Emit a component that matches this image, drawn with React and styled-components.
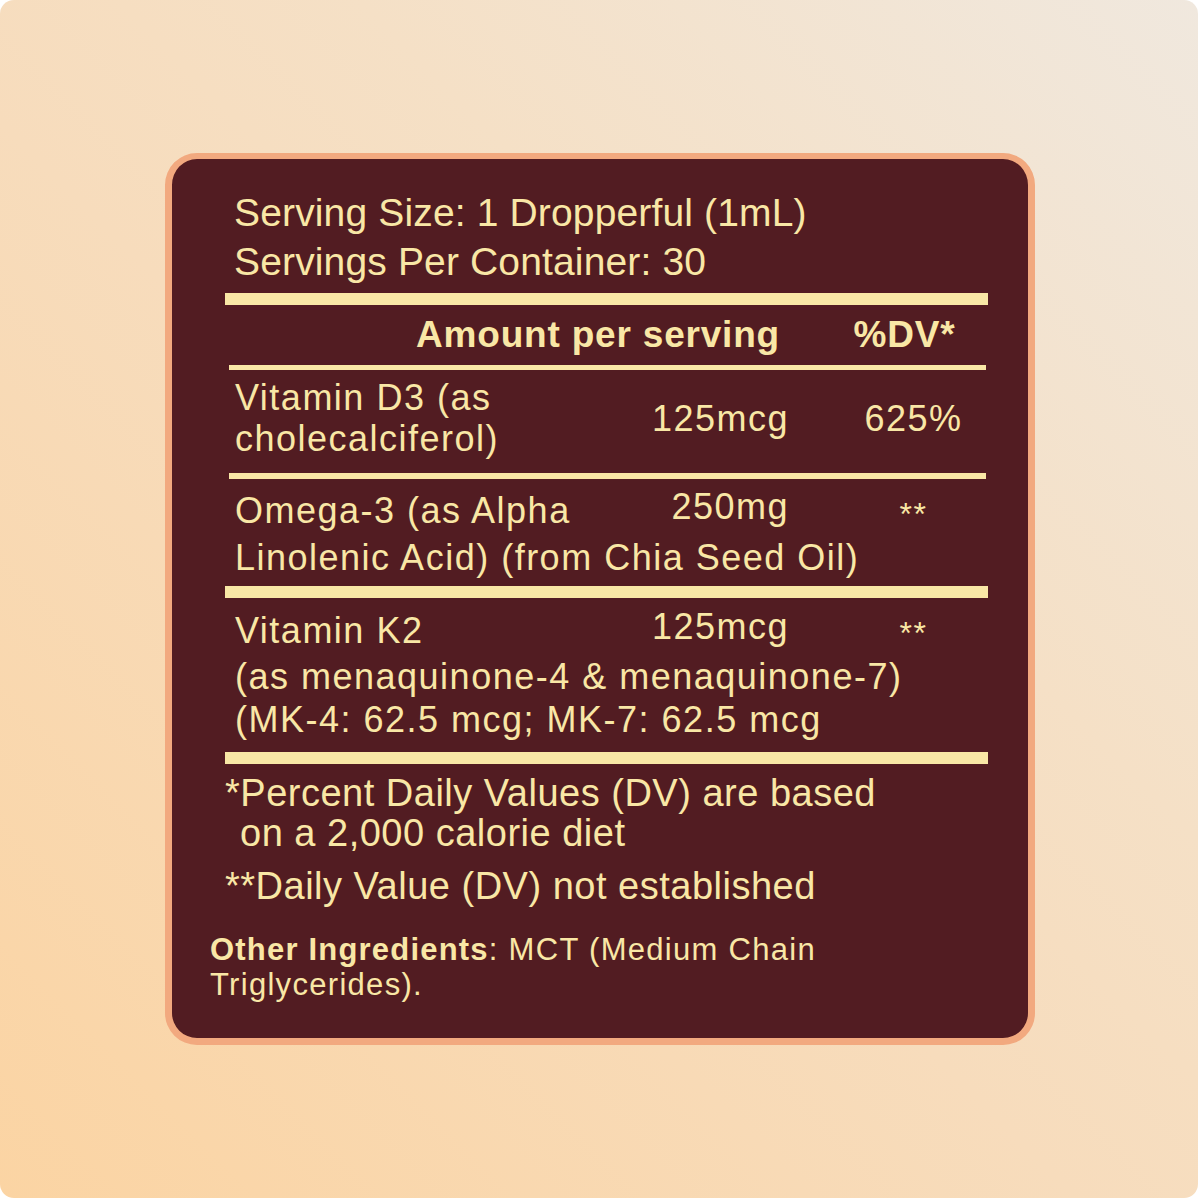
import React from "react";
import styled, { createGlobalStyle } from "styled-components";

const cream = "#f9e7a6";
const maroon = "#521c22";

const GlobalStyle = createGlobalStyle`
  html, body {
    margin: 0;
    padding: 0;
    background: #ffffff;
  }
  body {
    font-family: "Liberation Sans", Arial, Helvetica, sans-serif;
  }
`;

const nutrients = [
  {
    id: "d3",
    lines: ["Vitamin D3 (as", "cholecalciferol)"],
    amount: "125mcg",
    dv: "625%",
    stacked: true,
    lineHeight: 41,
    pad: [7, 14],
  },
  {
    id: "omega",
    lines: ["Omega-3 (as Alpha", "Linolenic Acid) (from Chia Seed Oil)"],
    amount: "250mg",
    dv: "**",
    lineHeight: 44,
    pad: [10, 6],
  },
  {
    id: "k2",
    lines: [
      "Vitamin K2",
      "(as menaquinone-4 & menaquinone-7)",
      "(MK-4: 62.5 mcg; MK-7: 62.5 mcg",
    ],
    amount: "125mcg",
    dv: "**",
    lineHeight: 43,
    pad: [11, 11],
  },
];

export default function App() {
  return (
    <>
      <GlobalStyle />
      <Frame>
        <Card>
          <Serving>
            <div>Serving Size: 1 Dropperful (1mL)</div>
            <div>Servings Per Container: 30</div>
          </Serving>

          <Facts>
            <Rule $h={12} />
            <HeadRow>
              <HeadAmount>Amount per serving</HeadAmount>
              <HeadDV>%DV*</HeadDV>
            </HeadRow>
            <Rule $h={5} $inset={4} />

            {nutrients.map((n, i) => (
              <React.Fragment key={n.id}>
                <NutrientRow $lh={n.lineHeight} $pt={n.pad[0]} $pb={n.pad[1]}>
                  {n.stacked ? (
                    <Name>
                      {n.lines.map(l => (
                        <div key={l}>{l}</div>
                      ))}
                    </Name>
                  ) : (
                    <Name>{n.lines[0]}</Name>
                  )}
                  <Amount $center={n.stacked}>{n.amount}</Amount>
                  <DV $center={n.stacked} $small={n.dv === "**"}>
                    {n.dv}
                  </DV>
                  {!n.stacked &&
                    n.lines.slice(1).map(l => <Wide key={l}>{l}</Wide>)}
                </NutrientRow>
                {i === 0 ? <Rule $h={6} $inset={4} /> : <Rule $h={12} />}
              </React.Fragment>
            ))}
          </Facts>

          <Notes>
            <Note>*Percent Daily Values (DV) are based on a 2,000 calorie diet</Note>
            <Note>**Daily Value (DV) not established</Note>
          </Notes>

          <Other>
            <strong>Other Ingredients</strong>: MCT (Medium Chain
            <br />
            Triglycerides).
          </Other>
        </Card>
      </Frame>
    </>
  );
}

const Frame = styled.div`
  width: 1198px;
  height: 1198px;
  border-radius: 14px;
  overflow: hidden;
  background: linear-gradient(
    45deg,
    #fbd4a3 0%,
    #f7dcbc 45%,
    #f5e0c6 65%,
    #f0e8de 100%
  );
  display: flex;
  justify-content: center;
  align-items: flex-start;
  padding-top: 153px;
  padding-left: 2px;
  box-sizing: border-box;
`;

const Card = styled.div`
  width: 870px;
  height: 892px;
  box-sizing: border-box;
  border: 7px solid #f2a97f;
  border-top-width: 6px;
  border-radius: 32px;
  background: ${maroon};
  color: ${cream};
  padding: 29px 40px 0 38px;
  display: flex;
  flex-direction: column;
`;

const Serving = styled.div`
  margin-left: 24px;
  font-size: 39px;
  line-height: 49px;
  letter-spacing: 0.15px;
  margin-bottom: 7px;
`;

const Facts = styled.div`
  margin-left: 15px;
  display: flex;
  flex-direction: column;
`;

const Rule = styled.div`
  height: ${p => p.$h}px;
  margin-left: ${p => p.$inset || 0}px;
  margin-right: ${p => (p.$inset ? 2 : 0)}px;
  background: ${cream};
`;

const grid = `
  display: grid;
  grid-template-columns: 1fr 160px 199px;
  padding-left: 10px;
`;

const HeadRow = styled.div`
  ${grid}
  font-size: 37px;
  font-weight: 700;
  letter-spacing: 0.8px;
  line-height: 42px;
  padding-top: 9px;
  padding-bottom: 9px;
`;

const HeadAmount = styled.div`
  grid-column: 1 / 3;
  text-align: right;
  padding-right: 9px;
`;

const HeadDV = styled.div`
  text-align: center;
  padding-left: 50px;
  padding-right: 18px;
`;

const NutrientRow = styled.div`
  ${grid}
  font-size: 36px;
  letter-spacing: 1.5px;
  line-height: ${p => p.$lh}px;
  padding-top: ${p => p.$pt}px;
  padding-bottom: ${p => p.$pb}px;
`;

const Name = styled.div`
  white-space: nowrap;
`;

const Amount = styled.div`
  text-align: right;
  align-self: ${p => (p.$center ? "center" : "start")};
  margin-top: ${p => (p.$center ? 0 : -4)}px;
`;

const DV = styled.div`
  text-align: center;
  padding-left: 50px;
  align-self: ${p => (p.$center ? "center" : "start")};
  font-size: ${p => (p.$small ? 32 : 36)}px;
  padding-top: ${p => (p.$small ? 3 : 0)}px;
`;

const Wide = styled.div`
  grid-column: 1 / -1;
  white-space: nowrap;
`;

const Notes = styled.div`
  margin-left: 15px;
  margin-top: 9px;
  display: flex;
  flex-direction: column;
  gap: 13px;
`;

const Note = styled.p`
  margin: 0;
  width: 660px;
  font-size: 38px;
  line-height: 40px;
  letter-spacing: 0.5px;
  padding-left: 15px;
  text-indent: -15px;
`;

const Other = styled.p`
  margin: 26px 0 0;
  font-size: 31px;
  line-height: 35px;
  letter-spacing: 1.3px;

  strong {
    font-weight: 700;
    letter-spacing: 1.2px;
  }
`;
